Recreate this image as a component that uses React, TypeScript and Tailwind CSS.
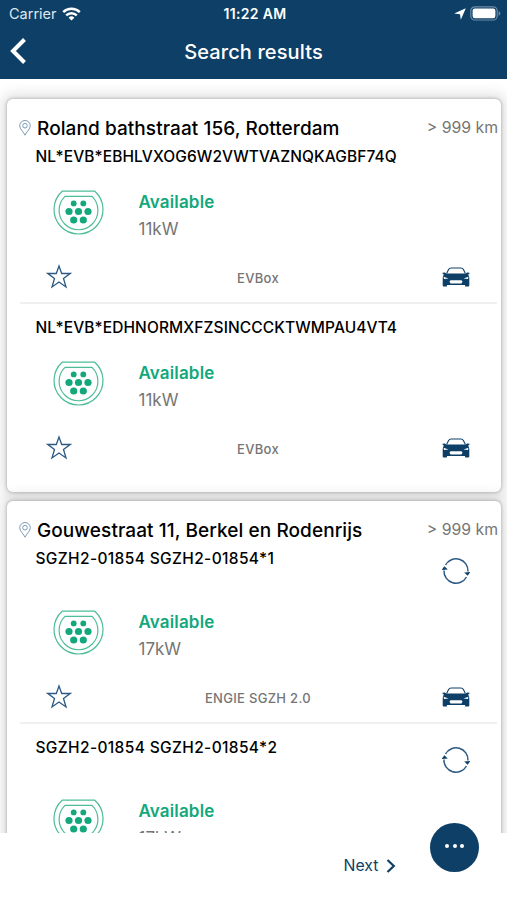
interface Charger {
  id: string
  power: string
  operator: string
  refreshable?: boolean
}

interface Location {
  address: string
  distance: string
  chargers: Charger[]
}

const locations: Location[] = [
  {
    address: "Roland bathstraat 156, Rotterdam",
    distance: "> 999 km",
    chargers: [
      { id: "NL*EVB*EBHLVXOG6W2VWTVAZNQKAGBF74Q", power: "11kW", operator: "EVBox" },
      { id: "NL*EVB*EDHNORMXFZSINCCCKTWMPAU4VT4", power: "11kW", operator: "EVBox" },
    ],
  },
  {
    address: "Gouwestraat 11, Berkel en Rodenrijs",
    distance: "> 999 km",
    chargers: [
      { id: "SGZH2-01854 SGZH2-01854*1", power: "17kW", operator: "ENGIE SGZH 2.0", refreshable: true },
      { id: "SGZH2-01854 SGZH2-01854*2", power: "17kW", operator: "ENGIE SGZH 2.0", refreshable: true },
    ],
  },
]

function WifiIcon() {
  return (
    <svg width="19" height="14" viewBox="0 0 19 14" fill="none" stroke="white" strokeWidth="2.5">
      <path d="M1.2 5.2a12 12 0 0 1 16.6 0" />
      <path d="M4.2 8.4a7.6 7.6 0 0 1 10.6 0" />
      <path d="M9.5 13.6 6.6 10.7a4.2 4.2 0 0 1 5.8 0z" fill="white" stroke="none" />
    </svg>
  )
}

function BatteryIcon() {
  return (
    <svg width="31" height="15" viewBox="0 0 31 15">
      <rect x="0.8" y="0.8" width="26.4" height="13.2" rx="4" fill="none" stroke="#6e8ca6" strokeWidth="1.2" />
      <rect x="2.6" y="2.6" width="22.8" height="9.6" rx="2.2" fill="white" />
      <path d="M28.6 5v4.8c1-.4 1.7-1.3 1.7-2.4S29.6 5.4 28.6 5z" fill="#6e8ca6" />
    </svg>
  )
}

function PinIcon() {
  return (
    <svg width="12" height="16" viewBox="0 0 12 16" fill="none" stroke="#7d9bb8" strokeWidth="1">
      <path d="M6 15.2C4.6 12 .7 9 .7 5.8a5.3 5.3 0 0 1 10.6 0C11.3 9 7.4 12 6 15.2z" />
      <circle cx="6" cy="5.7" r="2.3" />
    </svg>
  )
}

function SocketIcon() {
  return (
    <svg width="51" height="46" viewBox="0 0 51 46">
      <g fill="none" stroke="#4dbd98" strokeWidth="1.2">
        <path d="M9.2 1.2H41.8A24.5 24.5 0 1 1 9.2 1.2z" />
        <path d="M12 6.4H39A19.4 19.4 0 1 1 12 6.4z" />
      </g>
      <g fill="#12a87b">
        <circle cx="20.7" cy="13.4" r="2.9" />
        <circle cx="30.3" cy="13.4" r="2.9" />
        <circle cx="16" cy="21.5" r="3.6" />
        <circle cx="25.5" cy="21.5" r="3.6" />
        <circle cx="35" cy="21.5" r="3.6" />
        <circle cx="20.7" cy="30" r="3.6" />
        <circle cx="30.3" cy="30" r="3.6" />
      </g>
    </svg>
  )
}

function StarIcon() {
  return (
    <svg width="26" height="25" viewBox="0 0 26 25" fill="none" stroke="#2d5a85" strokeWidth="1.3" className="-mt-0.5">
      <path d="M13 2 15.7 9.5H24.1L17.5 14.5 20 23 13 18 6 23 8.5 14.5 1.9 9.5H10.3z" />
    </svg>
  )
}

function CarIcon() {
  return (
    <svg width="28" height="20" viewBox="0 0 28 20">
      <path d="M4.6 6.6 6.6 2.6Q7.4 1 9.2 1H18.8Q20.6 1 21.4 2.6L23.4 6.6" fill="none" stroke="#0e3f66" strokeWidth="1.1" />
      <path
        d="M.5 5.8 2.8 5.4 4.3 6.4H23.7L25.2 5.4 27.5 5.8 27.2 7.2 25.9 7.6Q27.3 9 27.3 11V18.5Q27.3 19.6 26.2 19.6H24.1Q23 19.6 23 18.4V18.1H5V18.4Q5 19.6 3.9 19.6H1.8Q.7 19.6.7 18.5V11Q.7 9 2.1 7.6L.8 7.2z"
        fill="#0e3f66"
      />
      <path d="M8.5 13.2H19.5L20.5 14.4 19.5 16.4H8.5L7.5 14.4z" fill="white" />
      <path d="M1.6 9.8 6.5 11.6 2 12zM26.4 9.8 21.5 11.6 26 12z" fill="white" />
    </svg>
  )
}

function RefreshIcon() {
  return (
    <svg width="28" height="28" viewBox="0 0 28 28" fill="none" stroke="#2d5a85" strokeWidth="1.5">
      <path d="M3.5 8A12 12 0 0 1 26 14.5" />
      <path d="M24.5 20A12 12 0 0 1 2 13.5" />
      <path d="M-.3 13 2.3 9.3 5.8 12.4zM28.3 15 25.7 18.7 22.2 15.6z" fill="#0e3f66" stroke="none" />
    </svg>
  )
}

function ChargerItem({ charger }: { charger: Charger }) {
  return (
    <div className="flex flex-col">
      <div className={`flex justify-between pr-[31px] pl-7 ${charger.refreshable ? "h-[46px] tracking-[0.36px]" : "h-7 tracking-[0.1px]"}`}>
        <p className="pl-[0.5px] text-[15.5px] leading-7 font-medium whitespace-nowrap">{charger.id}</p>
        {charger.refreshable && (
          <button aria-label="Refresh" className="self-start pt-3">
            <RefreshIcon />
          </button>
        )}
      </div>
      <div className="mt-[17px] flex pl-[46px]">
        <div className="w-[85.5px] pt-0.5">
          <SocketIcon />
        </div>
        <div className="-mb-px pt-px text-[17px] leading-[27px]">
          <p className="font-semibold tracking-[0.15px] text-[#12a87b]">Available</p>
          <p className="text-[#757575]">{charger.power}</p>
        </div>
      </div>
      <div className="mt-[10px] grid h-[50px] grid-cols-[1fr_auto_1fr] items-center pr-[31px] pl-[39px]">
        <StarIcon />
        <p className="pt-1 text-[13px] font-medium tracking-[0.3px] text-[#757575]">{charger.operator}</p>
        <button aria-label="Car" className="justify-self-end">
          <CarIcon />
        </button>
      </div>
    </div>
  )
}

function LocationCard({ location }: { location: Location }) {
  return (
    <section className="rounded-[6px] bg-white pt-[14px] pb-[19px] shadow-[0_0_3px_1px_rgba(0,0,0,0.18),0_0_14px_5px_rgba(0,0,0,0.12)]">
      <div className="flex h-[30px] items-center pr-[3px] pl-3">
        <PinIcon />
        <h2 className="ml-[6px] pt-0.5 text-[19px] font-medium tracking-[0.08px] whitespace-nowrap">{location.address}</h2>
        <span className="ml-auto text-[15.8px] leading-6 whitespace-nowrap text-[#757575]">{location.distance}</span>
      </div>
      {location.chargers.map((charger, i) => (
        <div key={charger.id}>
          {i > 0 && <div className="mr-1 mb-[10px] ml-[13px] h-0.5 bg-[#f0f0f0]" />}
          <ChargerItem charger={charger} />
        </div>
      ))}
    </section>
  )
}

export default function App() {
  return (
    <div className="flex h-[900px] w-full flex-col overflow-hidden bg-white font-[Inter,sans-serif] text-black">
      <header className="h-[79px] shrink-0 bg-[#0e3f66] text-white">
        <div className="grid h-[27px] grid-cols-[1fr_auto_1fr] items-center pr-[6px] pl-[9px]">
          <div className="flex items-center gap-[5px] text-[14.5px] text-[#dfe7ee]">
            Carrier
            <WifiIcon />
          </div>
          <span className="text-[14px] font-semibold tracking-[0.35px]">11:22 AM</span>
          <div className="flex items-center justify-end gap-1">
            <svg width="12" height="12" viewBox="0 0 12 12" fill="white">
              <path d="M11.8.2 6.8 11.8 6 6.2.2 5.4z" />
            </svg>
            <BatteryIcon />
          </div>
        </div>
        <div className="grid h-12 grid-cols-[1fr_auto_1fr] items-center px-[10px]">
          <button aria-label="Back">
            <svg width="18" height="26" viewBox="0 0 18 26" fill="none" stroke="white" strokeWidth="4">
              <path d="M14.5 1.5 3 13 14.5 24.5" />
            </svg>
          </button>
          <h1 className="pt-0.5 text-[20px] font-medium tracking-[0.1px]">Search results</h1>
        </div>
      </header>

      <main className="flex min-h-0 flex-1 flex-col gap-[9px] overflow-hidden pt-5 pr-[6px] pl-[7px] *:shrink-0">
        {locations.map((location) => (
          <LocationCard key={location.address} location={location} />
        ))}
      </main>

      <footer className="relative flex h-[67px] shrink-0 items-center bg-white pb-0.5 pl-[343.5px] text-[#0e3f66]">
        <button className="flex items-center gap-2 text-[15.8px]">
          Next
          <svg width="10" height="14" viewBox="0 0 10 14" fill="none" stroke="currentColor" strokeWidth="2.2">
            <path d="M1.5 1 7.8 7 1.5 13" />
          </svg>
        </button>
        <button
          aria-label="More"
          className="absolute -top-[10px] right-7 flex size-[49px] items-center justify-center gap-[3.5px] rounded-full bg-[#0e3f66] pb-[3px]"
        >
          <span className="size-1 rounded-full bg-white" />
          <span className="size-1 rounded-full bg-white" />
          <span className="size-1 rounded-full bg-white" />
        </button>
      </footer>
    </div>
  )
}
